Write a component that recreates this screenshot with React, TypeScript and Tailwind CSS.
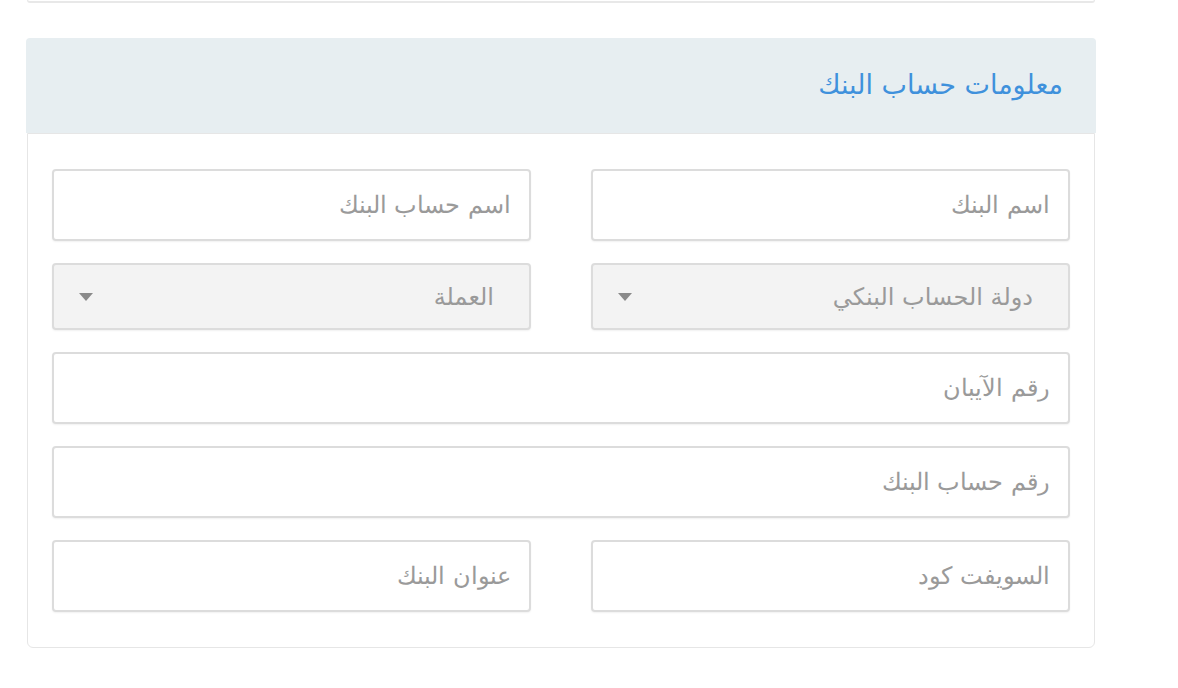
const font = { fontFamily: '"DejaVu Sans", "Noto Sans", sans-serif' }

function Field({ placeholder, wide = false }: { placeholder: string; wide?: boolean }) {
  return (
    <div className={wide ? "col-span-2" : ""}>
      <input
        placeholder={placeholder}
        className="h-[72px] w-full rounded-[4px] border-2 border-[#dcdcdc] bg-white px-[18px] text-[24px] font-light text-[#555] shadow-[0_1px_2px_rgba(0,0,0,0.06)] outline-none placeholder:text-[#9a9a9a]"
      />
    </div>
  )
}

function SelectBox({ label }: { label: string }) {
  return (
    <div className="flex h-[67px] items-center justify-between rounded-[4px] border-2 border-[#dcdcdc] bg-[#f3f3f3] pl-[24px] pr-[35px] shadow-[0_1px_2px_rgba(0,0,0,0.06)]">
      <span className="text-[24px] text-[#9a9a9a]">{label}</span>
      <svg width="16" height="8" viewBox="0 0 16 8">
        <path d="M1 0 L15 0 L8 8 Z" fill="#8a8a8a" />
      </svg>
    </div>
  )
}

export default function App() {
  return (
    <div style={font} className="min-h-[688px] w-[1178px] bg-white pl-[26px]">
      <div dir="rtl" className="w-[1070px]">
        {/* previous card bottom */}
        <div className="mx-[1px] h-[3px] rounded-b-[6px] border-x border-b-2 border-[#e8e8e8]" />

        <div className="mt-[35px]">
          <div className="flex h-[95px] items-center rounded-t-[4px] bg-[#e7eef1] pr-[33px]">
            <h2 className="text-[27px] text-[#3f91dc]">معلومات حساب البنك</h2>
          </div>

          <div className="mx-[1px] rounded-b-[6px] border border-[#e6e6e6] px-[24px] pb-[35px] pt-[35px]">
            <div className="grid grid-cols-2 gap-x-[60px] gap-y-[22px]">
              <Field placeholder="اسم البنك" />
              <Field placeholder="اسم حساب البنك" />
              <SelectBox label="دولة الحساب البنكي" />
              <SelectBox label="العملة" />
              <Field placeholder="رقم الآيبان" wide />
              <Field placeholder="رقم حساب البنك" wide />
              <Field placeholder="السويفت كود" />
              <Field placeholder="عنوان البنك" />
            </div>
          </div>
        </div>
      </div>
    </div>
  )
}
